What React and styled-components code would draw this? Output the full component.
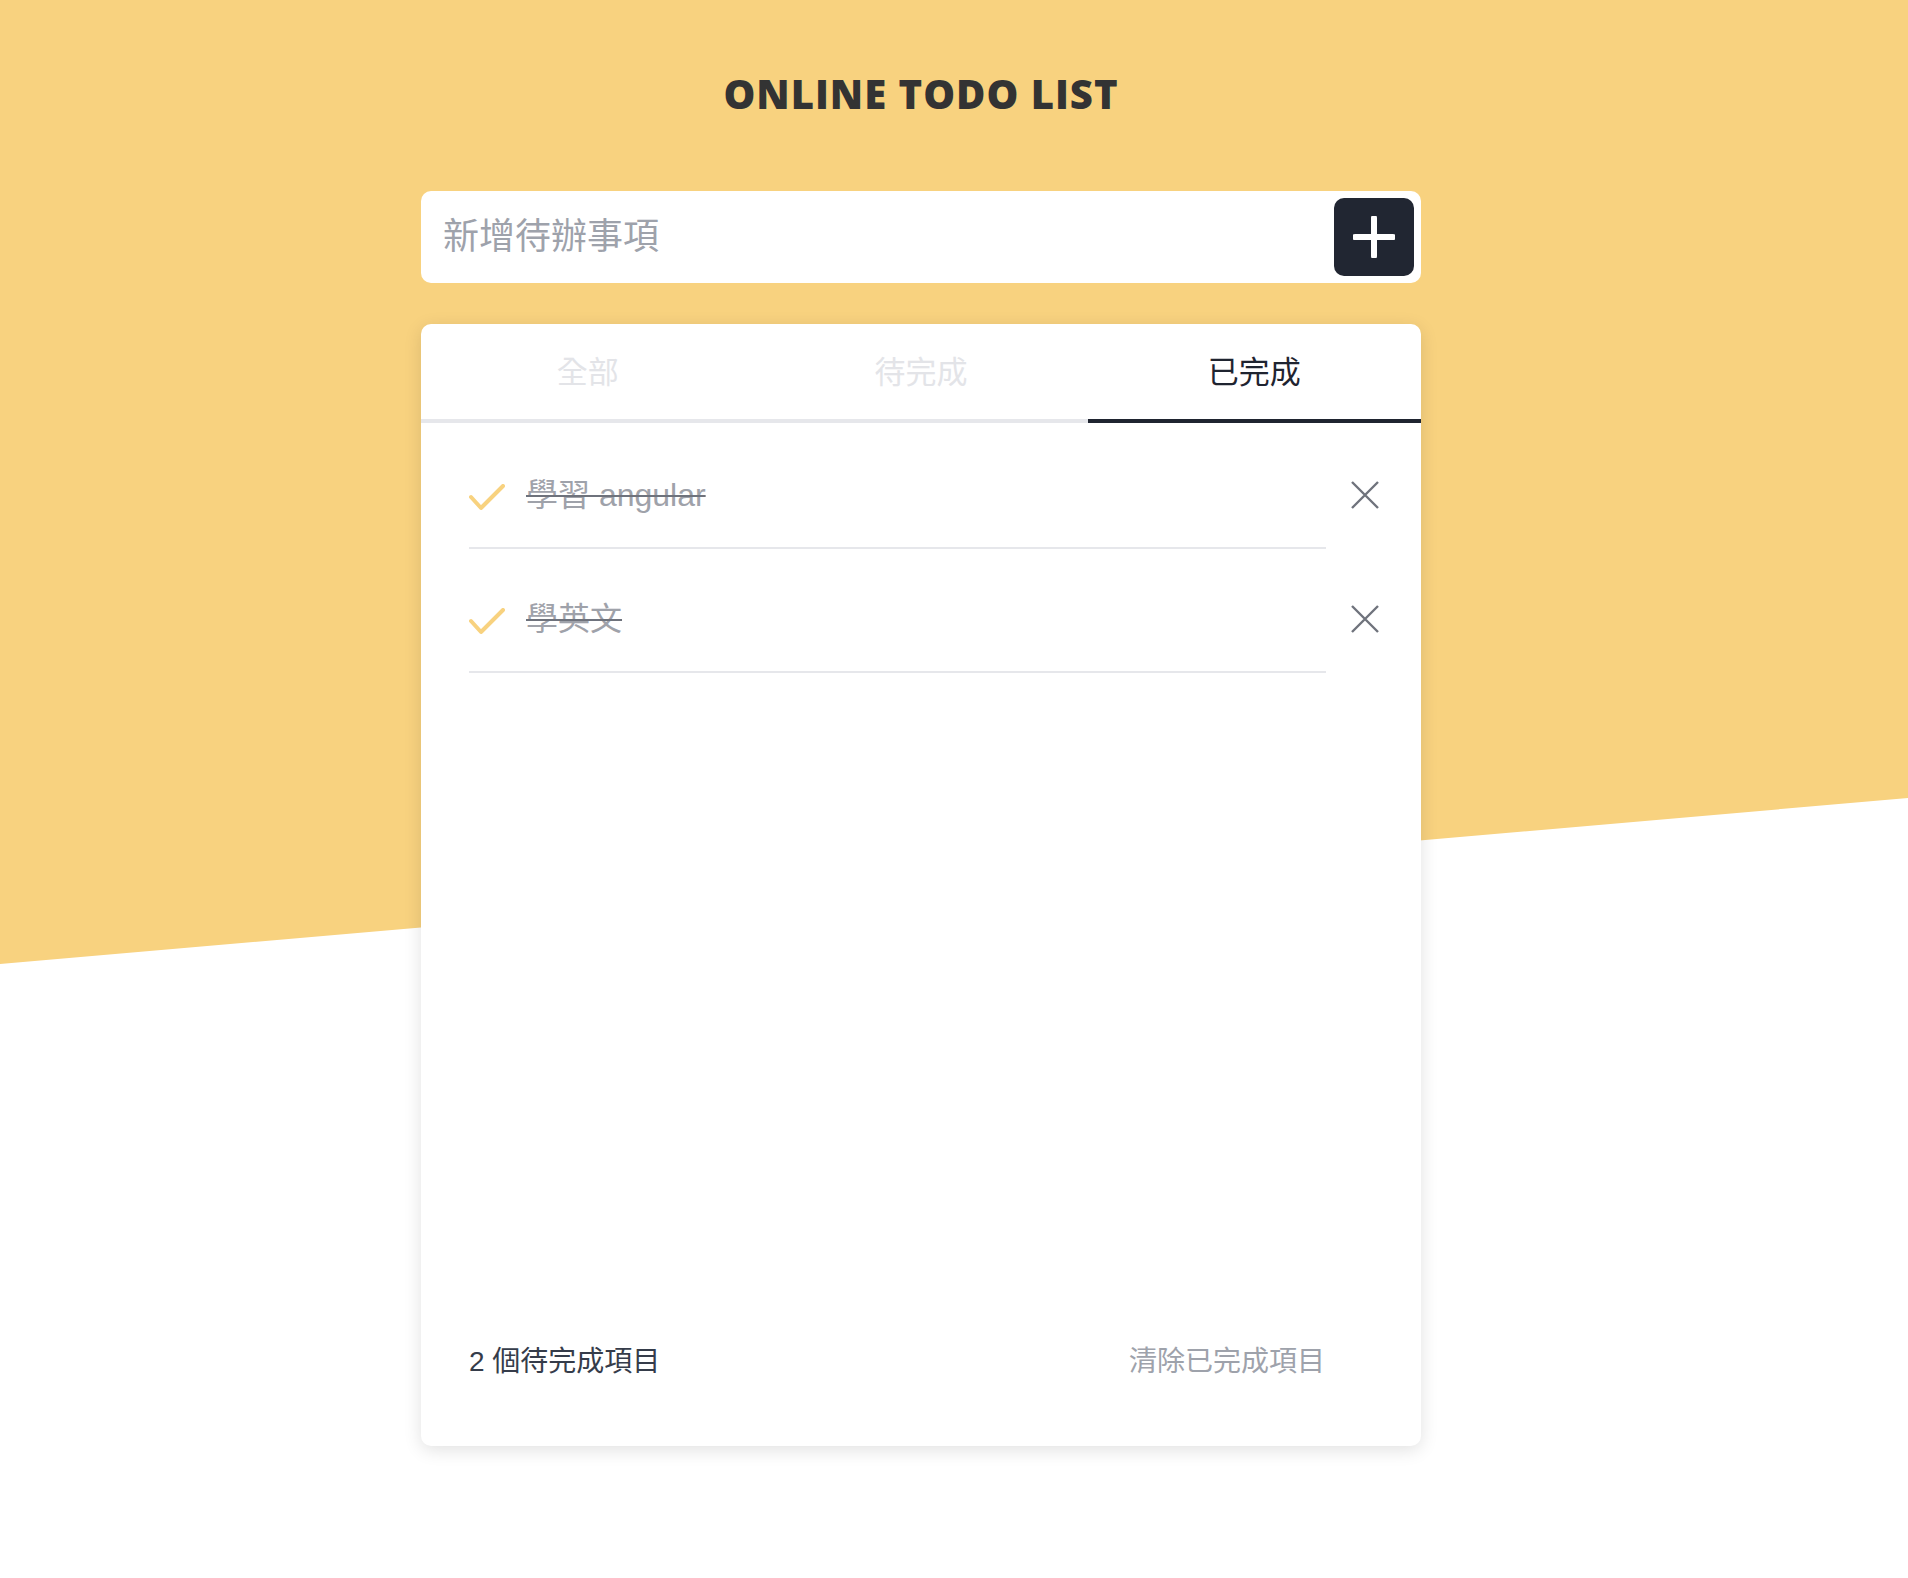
import React from "react";
import styled, { createGlobalStyle } from "styled-components";

const GlobalStyle = createGlobalStyle`
  body {
    margin: 0;
    background: #fff;
    font-family: "Liberation Sans", "Noto Sans CJK TC", sans-serif;
  }
  * {
    box-sizing: border-box;
  }
`;

const todos = [
  { id: 1, text: "學習 angular" },
  { id: 2, text: "學英文" },
];

const tabs = [
  { key: "all", label: "全部" },
  { key: "todo", label: "待完成" },
  { key: "done", label: "已完成", active: true },
];

const CheckIcon = () => (
  <svg width="36" height="27" viewBox="0 0 36 27" fill="none">
    <polyline
      points="2,13 12,24 34,2"
      stroke="#F8D27F"
      strokeWidth="4"
      strokeLinecap="round"
      strokeLinejoin="round"
    />
  </svg>
);

const CloseIcon = () => (
  <svg width="28" height="28" viewBox="0 0 28 28" fill="none">
    <path d="M1 1L27 27M27 1L1 27" stroke="#6f737c" strokeWidth="2.4" />
  </svg>
);

const PlusIcon = () => (
  <svg width="42" height="42" viewBox="0 0 42 42" fill="none">
    <path
      d="M21 2V40M2 21H40"
      stroke="#fff"
      strokeWidth="6"
      strokeLinecap="round"
    />
  </svg>
);

const App = () => (
  <>
    <GlobalStyle />
    <Page>
      <Title>ONLINE TODO LIST</Title>
      <Content>
        <InputBar>
          <TodoInput placeholder="新增待辦事項" />
          <AddButton>
            <PlusIcon />
          </AddButton>
        </InputBar>

        <Card>
          <TabBar>
            {tabs.map((tab) => (
              <Tab key={tab.key} active={tab.active}>
                {tab.label}
              </Tab>
            ))}
          </TabBar>

          <List>
            {todos.map((todo) => (
              <Item key={todo.id}>
                <ItemBody>
                  <CheckIcon />
                  <ItemText>{todo.text}</ItemText>
                </ItemBody>
                <DeleteButton>
                  <CloseIcon />
                </DeleteButton>
              </Item>
            ))}
          </List>

          <Footer>
            <Count>2 個待完成項目</Count>
            <ClearLink>清除已完成項目</ClearLink>
          </Footer>
        </Card>
      </Content>
    </Page>
  </>
);

const Page = styled.div`
  position: relative;
  min-height: 1578px;
  padding: 0 66px 0 0;
  overflow: hidden;

  &::before {
    content: "";
    position: absolute;
    top: 0;
    left: 0;
    width: 100%;
    height: 964px;
    background: #f8d27f;
    clip-path: polygon(0 0, 100% 0, 100% 798px, 0 964px);
    z-index: 0;
  }
`;

const Title = styled.h1`
  position: relative;
  margin: 0;
  padding-top: 70px;
  text-align: center;
  font-family: "Open Sans", sans-serif;
  font-weight: 800;
  font-size: 40px;
  line-height: 48px;
  color: #333;
  letter-spacing: 1px;
`;

const Content = styled.div`
  position: relative;
  width: 1000px;
  margin: 0 auto;
  padding-top: 73px;
`;

const InputBar = styled.div`
  display: flex;
  align-items: center;
  height: 92px;
  padding: 0 7px 0 20px;
  background: #fff;
  border-radius: 10px;
`;

const TodoInput = styled.input`
  flex: 1;
  border: none;
  outline: none;
  background: transparent;
  font-family: "Liberation Sans", "Noto Sans CJK TC", sans-serif;
  font-size: 36px;
  color: #333;

  &::placeholder {
    color: #9ea2ab;
  }
`;

const AddButton = styled.button`
  display: flex;
  align-items: center;
  justify-content: center;
  width: 80px;
  height: 78px;
  padding: 0;
  border: none;
  border-radius: 10px;
  background: #212632;
  cursor: pointer;
`;

const Card = styled.div`
  display: flex;
  flex-direction: column;
  min-height: 1122px;
  margin-top: 41px;
  background: #fff;
  border-radius: 10px;
  box-shadow: 0 4px 18px rgba(0, 0, 0, 0.12);
  overflow: hidden;
`;

const TabBar = styled.div`
  display: grid;
  grid-template-columns: repeat(3, 1fr);
`;

const Tab = styled.div`
  height: 99px;
  padding-bottom: 4px;
  display: flex;
  align-items: center;
  justify-content: center;
  font-size: 31px;
  color: ${({ active }) => (active ? "#1f2430" : "#e3e4e8")};
  border-bottom: 4px solid ${({ active }) => (active ? "#1f2430" : "#e6e7eb")};
  cursor: pointer;
`;

const List = styled.ul`
  list-style: none;
  margin: 0;
  padding: 2px 42px 0 48px;
`;

const Item = styled.li`
  display: flex;
  align-items: flex-start;
`;

const ItemBody = styled.div`
  flex: 1;
  display: flex;
  align-items: center;
  gap: 21px;
  padding: 50px 0 32px;
  border-bottom: 2px solid #e6e7eb;

  svg {
    flex: none;
    margin-top: 4px;
  }
`;

const ItemText = styled.span`
  font-size: 32px;
  line-height: 40px;
  color: #9fa2aa;
  text-decoration: line-through;
  text-decoration-color: #6e727c;
  text-decoration-thickness: 2px;
`;

const DeleteButton = styled.button`
  flex: none;
  margin: 56px 0 0 25px;
  padding: 0;
  border: none;
  background: none;
  cursor: pointer;
  line-height: 0;
`;

const Footer = styled.div`
  margin-top: auto;
  display: flex;
  justify-content: space-between;
  align-items: center;
  padding: 0 96px 64px 48px;
  font-size: 28px;
  line-height: 40px;
`;

const Count = styled.span`
  color: #353c4a;
`;

const ClearLink = styled.a`
  color: #9ea2ab;
  cursor: pointer;
`;

export default App;
